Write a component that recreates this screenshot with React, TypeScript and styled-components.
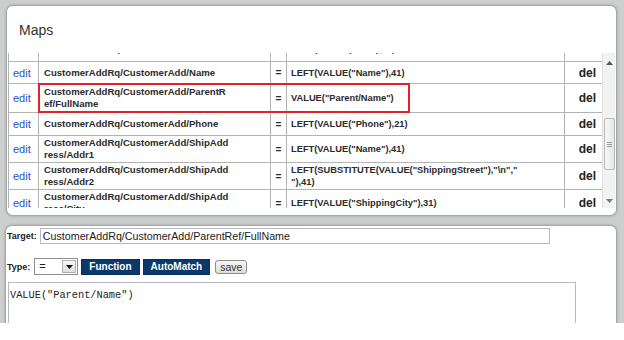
import React from 'react';
import styled, { createGlobalStyle } from 'styled-components';

const GlobalStyle = createGlobalStyle`
  html, body {
    margin: 0;
    padding: 0;
    background: #ffffff;
  }
  body {
    font-family: "Liberation Sans", Arial, sans-serif;
  }
`;

const Screen = styled.div`
  width: 624px;
  height: 323px;
  box-sizing: border-box;
  overflow: hidden;
  background-color: #cdcfcf;
  padding: 5px 7px 0 5px;
  display: flex;
  flex-direction: column;
  gap: 9px;
`;

/* ---------- Maps panel ---------- */

const MapsPanel = styled.section`
  flex-shrink: 0;
  margin-left: 1px;
  height: 211px;
  box-sizing: border-box;
  background: #fff;
  border: 1px solid #a6a8a8;
  border-radius: 7px;
  box-shadow: 0 0 3px rgba(0, 0, 0, 0.25);
  display: flex;
  flex-direction: column;
`;

const PanelTitle = styled.h2`
  margin: 0;
  height: 47px;
  box-sizing: border-box;
  padding: 15px 0 0 12px;
  font-size: 14px;
  line-height: 18px;
  font-weight: normal;
  color: #333;
`;

const TableArea = styled.div`
  margin-left: 1px;
  height: 155px;
  display: flex;
`;

const TableClip = styled.div`
  width: 594px;
  height: 100%;
  overflow: hidden;
`;

// scrolled a little: only the foot of the first row peeks out
const MapTable = styled.table`
  width: 594px;
  margin-top: -17px;
  border-collapse: collapse;
  table-layout: fixed;
  font-family: "Liberation Sans", Arial, sans-serif;
`;

const Col = styled.col<{ $w: number }>`
  width: ${({ $w }) => $w}px;
`;

const Row = styled.tr<{ $h: number }>`
  td {
    height: ${({ $h }) => $h}px;
    box-sizing: border-box;
  }
`;

const Cell = styled.td`
  border: 1px solid #b3b3b3;
  padding: 0 4px;
  vertical-align: middle;
  color: #2b2b2b;
`;

const EditCell = styled(Cell)`
  font-size: 11px;
  color: #1d55c9;
`;

const PathCell = styled(Cell)`
  position: relative;
  padding: 1px 40px 1px 5px;
  font-size: 9.6px;
  line-height: 12px;
  font-weight: bold;
  word-break: break-all;
`;

const EqCell = styled(Cell)`
  padding: 0;
  text-align: center;
  font-size: 10px;
  font-weight: bold;
`;

const ValueCell = styled(Cell)`
  padding: 1px 30px 1px 4px;
  font-size: 9.3px;
  line-height: 12px;
  font-weight: bold;
`;

const DelCell = styled(Cell)`
  padding: 0 6px 0 0;
  text-align: right;
  font-size: 12px;
  font-weight: bold;
  color: #222;
`;

const Highlight = styled.span`
  position: absolute;
  left: -1px;
  top: -1px;
  width: 372px;
  height: 30px;
  box-sizing: border-box;
  border: 2px solid #e3212b;
  pointer-events: none;
`;

/* ---------- scrollbar ---------- */

const ScrollTrack = styled.div`
  position: relative;
  width: 13px;
  height: 100%;
  box-sizing: border-box;
  background: #f2f2f2;
  border-left: 1px solid #e2e2e2;
`;

const ScrollArrow = styled.div<{ $down?: boolean }>`
  position: absolute;
  left: 0;
  right: 0;
  ${({ $down }) => ($down ? 'bottom: 4px;' : 'top: 6px;')}
  height: 7px;
  display: flex;
  align-items: center;
  justify-content: center;
`;

const ScrollThumb = styled.div`
  position: absolute;
  left: 1px;
  right: 0;
  top: 65px;
  height: 52px;
  box-sizing: border-box;
  border: 1px solid #b9b9b9;
  border-radius: 2px;
  background: linear-gradient(to right, #f8f8f8, #e6e6e6);
  display: flex;
  flex-direction: column;
  align-items: center;
  justify-content: center;
  gap: 1px;
`;

const Grip = styled.span`
  width: 5px;
  height: 1px;
  background: #9a9a9a;
`;

/* ---------- editor panel ---------- */

const EditorPanel = styled.section`
  flex-shrink: 0;
  height: 120px;
  box-sizing: border-box;
  background: #fff;
  border: 1px solid #a6a8a8;
  border-radius: 7px 7px 0 0;
  box-shadow: 0 0 3px rgba(0, 0, 0, 0.25);
  padding: 2px 0 0 1px;
`;

const FieldRow = styled.div<{ $gap: number; $top?: number }>`
  display: flex;
  align-items: center;
  gap: ${({ $gap }) => $gap}px;
  margin-top: ${({ $top = 0 }) => $top}px;
`;

const Label = styled.label`
  font-size: 9px;
  font-weight: bold;
  color: #222;
`;

const TargetInput = styled.input`
  width: 510px;
  height: 16px;
  box-sizing: border-box;
  margin: 0;
  padding: 0 2px;
  border: 1px solid #b7b7bf;
  font-family: "Liberation Sans", Arial, sans-serif;
  font-size: 10.7px;
  color: #222;
  outline: none;
`;

const SelectBox = styled.div`
  width: 44px;
  height: 17px;
  box-sizing: border-box;
  border: 1px solid #8f8f8f;
  display: flex;
  align-items: stretch;
  background: #fff;
  margin-left: 1px;
`;

const SelectValue = styled.span`
  flex: 1;
  padding-left: 4px;
  font-size: 11px;
  line-height: 15px;
  color: #222;
`;

const SelectArrow = styled.span`
  width: 14px;
  box-sizing: border-box;
  margin: 1px;
  border: 1px solid #b0b0b0;
  background: linear-gradient(#f7f7f7, #dedede);
  display: flex;
  align-items: center;
  justify-content: center;
`;

const NavyButton = styled.button`
  height: 16px;
  margin: 0;
  padding: 0 7px;
  border: 1px solid #08305a;
  background: #0b3a6a;
  color: #fff;
  font-family: "Liberation Sans", Arial, sans-serif;
  font-size: 10px;
  font-weight: bold;
  line-height: 14px;
`;

const SaveButton = styled.button`
  height: 14px;
  margin: 0 0 0 2px;
  padding: 0 4px;
  border: 1px solid #8c8c8c;
  border-radius: 3px;
  background: linear-gradient(#f6f6f6, #dcdcdc);
  color: #333;
  font-family: "Liberation Sans", Arial, sans-serif;
  font-size: 10.5px;
  line-height: 12px;
`;

const Formula = styled.textarea`
  display: block;
  width: 568px;
  height: 70px;
  box-sizing: border-box;
  margin: 7px 0 0 1px;
  padding: 6px 1px;
  border: 1px solid #b7b7bf;
  resize: none;
  font-family: "Liberation Mono", "Courier New", monospace;
  font-size: 10.3px;
  line-height: 12px;
  color: #222;
  outline: none;
`;

type MapRow = { path: string; value: string; h: number; highlight?: boolean };

const rows: MapRow[] = [
  { path: 'CustomerAddRq/CustomerAdd/Fax', value: 'LEFT(VALUE("Fax"),21)', h: 25 },
  { path: 'CustomerAddRq/CustomerAdd/Name', value: 'LEFT(VALUE("Name"),41)', h: 22 },
  { path: 'CustomerAddRq/CustomerAdd/ParentRef/FullName', value: 'VALUE("Parent/Name")', h: 29, highlight: true },
  { path: 'CustomerAddRq/CustomerAdd/Phone', value: 'LEFT(VALUE("Phone"),21)', h: 23 },
  { path: 'CustomerAddRq/CustomerAdd/ShipAddress/Addr1', value: 'LEFT(VALUE("Name"),41)', h: 26 },
  {
    path: 'CustomerAddRq/CustomerAdd/ShipAddress/Addr2',
    value: 'LEFT(SUBSTITUTE(VALUE("ShippingStreet"),"\\n"," "),41)',
    h: 26,
  },
  { path: 'CustomerAddRq/CustomerAdd/ShipAddress/City', value: 'LEFT(VALUE("ShippingCity"),31)', h: 26 },
  { path: 'CustomerAddRq/CustomerAdd/ShipAddress/State', value: 'LEFT(VALUE("ShippingState"),21)', h: 26 },
];

const Triangle = ({ down }: { down?: boolean }) => (
  <svg width="7" height="4" viewBox="0 0 7 4">
    <path d={down ? 'M0 0H7L3.5 4Z' : 'M0 4H7L3.5 0Z'} fill={down ? '#7a7a7a' : '#555'} />
  </svg>
);

export default function App() {
  return (
    <>
      <GlobalStyle />
      <Screen>
        <MapsPanel>
          <PanelTitle>Maps</PanelTitle>
          <TableArea>
            <TableClip>
              <MapTable>
                <colgroup>
                  <Col $w={30} />
                  <Col $w={232} />
                  <Col $w={16} />
                  <Col $w={278} />
                  <Col $w={38} />
                </colgroup>
                <tbody>
                  {rows.map((r) => (
                    <Row key={r.path} $h={r.h}>
                      <EditCell>edit</EditCell>
                      <PathCell>
                        {r.path}
                        {r.highlight && <Highlight />}
                      </PathCell>
                      <EqCell>=</EqCell>
                      <ValueCell>{r.value}</ValueCell>
                      <DelCell>del</DelCell>
                    </Row>
                  ))}
                </tbody>
              </MapTable>
            </TableClip>
            <ScrollTrack>
              <ScrollArrow>
                <Triangle />
              </ScrollArrow>
              <ScrollThumb>
                <Grip />
                <Grip />
                <Grip />
              </ScrollThumb>
              <ScrollArrow $down>
                <Triangle down />
              </ScrollArrow>
            </ScrollTrack>
          </TableArea>
        </MapsPanel>

        <EditorPanel>
          <FieldRow $gap={3}>
            <Label>Target:</Label>
            <TargetInput readOnly value="CustomerAddRq/CustomerAdd/ParentRef/FullName" />
          </FieldRow>
          <FieldRow $gap={3} $top={14}>
            <Label>Type:</Label>
            <SelectBox>
              <SelectValue>=</SelectValue>
              <SelectArrow>
                <svg width="7" height="4" viewBox="0 0 7 4">
                  <path d="M0 0H7L3.5 4Z" fill="#111" />
                </svg>
              </SelectArrow>
            </SelectBox>
            <NavyButton>Function</NavyButton>
            <NavyButton>AutoMatch</NavyButton>
            <SaveButton>save</SaveButton>
          </FieldRow>
          <Formula readOnly value={'VALUE("Parent/Name")'} />
        </EditorPanel>
      </Screen>
    </>
  );
}
